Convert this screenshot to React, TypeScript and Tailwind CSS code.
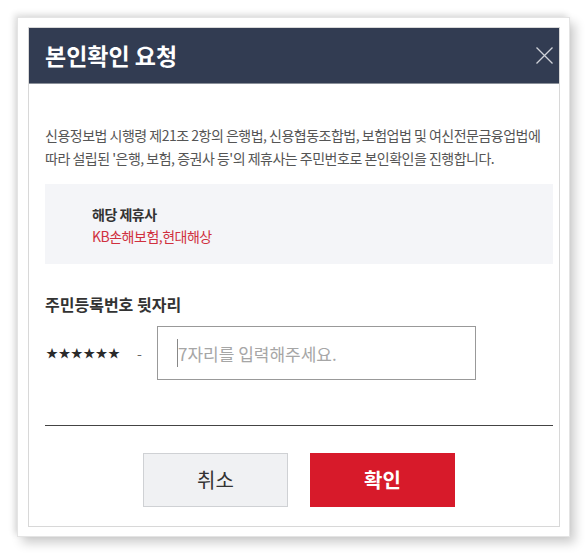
const FONT = "font-['Noto_Sans_CJK_KR','Noto_Sans',sans-serif]";

export default function App() {
  return (
    <div className={`w-[588px] h-[555px] bg-white pt-[17px] pl-[17px] ${FONT}`}>
      <div className="w-[553px] h-[520px] bg-white border border-[#e4e4e4] p-[10px] shadow-[-3px_-3px_6px_rgba(0,0,0,0.12),5px_6px_10px_rgba(0,0,0,0.2)]">
        <div className="w-[532px] h-[500px] -mt-[1px] border border-[#d8d8d8] flex flex-col">
          <div className="h-[56px] shrink-0 bg-[#323c52] border-b border-[#8a9099] flex items-center justify-between pl-[16px] pr-[6px]">
            <h1 className="text-[23px] font-bold text-white">본인확인 요청</h1>
            <svg width="17" height="17" viewBox="0 0 17 17">
              <path d="M0.5 0.5 L16.5 16.5 M16.5 0.5 L0.5 16.5" stroke="#cfd2d8" strokeWidth="1.3" />
            </svg>
          </div>
          <div className="flex flex-col pl-[16px] pr-[6px]">
            <p className="mt-[40px] text-[14px] leading-[23px] text-[#555] tracking-[-0.5px]">
              신용정보법 시행령 제21조 2항의 은행법, 신용협동조합법, 보험업법 및 여신전문금융업법에
              <br />
              따라 설립된 '은행, 보험, 증권사 등'의 제휴사는 주민번호로 본인확인을 진행합니다.
            </p>
            <div className="mt-[14px] h-[80px] bg-[#f4f5f8] pl-[47px] pt-[19px] text-[14px] leading-[22px] tracking-[-0.5px]">
              <div className="font-bold text-[#333]">해당 제휴사</div>
              <div className="text-[#d0303e]">KB손해보험,현대해상</div>
            </div>
            <div className="mt-[28px] text-[16px] leading-[24px] font-bold text-[#333]">
              주민등록번호 뒷자리
            </div>
            <div className="mt-[10px] flex items-center">
              <span className="w-[92px] pl-[1px] text-[12px] text-[#2a2a2a] tracking-[0.4px]">★★★★★★</span>
              <span className="w-[20px] text-[14px] text-[#666]">-</span>
              <div className="relative w-[319px] h-[54px] border border-[#999]">
                <span className="absolute left-[19px] top-[12px] w-[1px] h-[28px] bg-[#888]" />
                <input
                  className="w-full h-full pl-[20px] text-[17px] outline-none placeholder:text-[#a6a6a6]"
                  placeholder="7자리를 입력해주세요."
                />
              </div>
            </div>
            <div className="mt-[45px] border-t border-[#444]" />
            <div className="mt-[27px] flex justify-center gap-[22px]">
              <button className="w-[145px] h-[54px] bg-[#f0f1f3] border border-[#cfd1d4] text-[20px] text-[#333]">
                취소
              </button>
              <button className="w-[145px] h-[54px] bg-[#d71a2a] text-[20px] text-white font-bold">
                확인
              </button>
            </div>
          </div>
        </div>
      </div>
    </div>
  );
}
